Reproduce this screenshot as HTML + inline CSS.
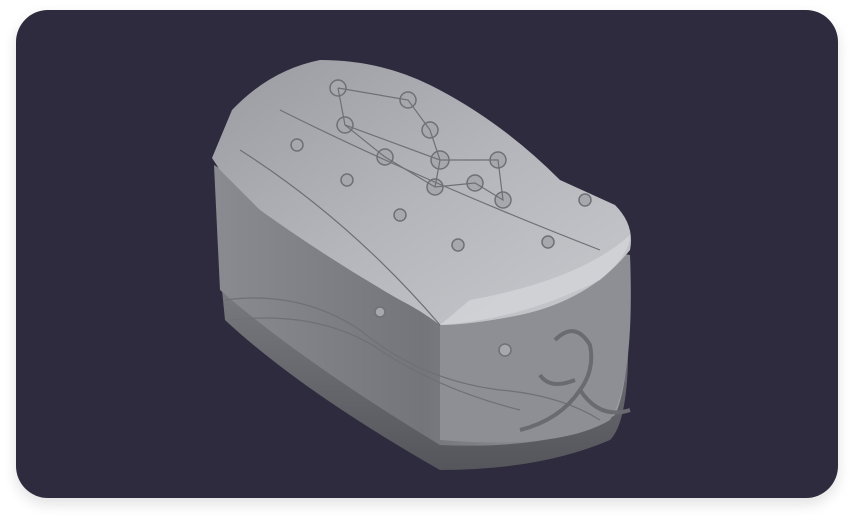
<!DOCTYPE html>
<html><head><style>
html,body{margin:0;padding:0;background:#fff;width:854px;height:520px;overflow:hidden}
.card{position:absolute;left:16px;top:10px;width:822px;height:488px;background:#2f2b3f;border-radius:32px;box-shadow:0 6px 14px rgba(0,0,0,.12)}
svg{position:absolute;left:0;top:0}
</style></head><body>
<div class="card"></div>
<svg width="854" height="520" viewBox="0 0 854 520">
<defs>
<linearGradient id="lid" x1="0" y1="0" x2="1" y2="1">
<stop offset="0" stop-color="#9a9ba0"/><stop offset=".5" stop-color="#b4b5ba"/><stop offset="1" stop-color="#c8c9cd"/></linearGradient>
<linearGradient id="body" x1="0" y1="0" x2="1" y2="0">
<stop offset="0" stop-color="#8a8b90"/><stop offset=".5" stop-color="#74757a"/><stop offset="1" stop-color="#9d9ea3"/></linearGradient>
<linearGradient id="base" x1="0" y1="0" x2="0" y2="1">
<stop offset="0" stop-color="#7c7d82"/><stop offset="1" stop-color="#55565b"/></linearGradient>
</defs>
<!-- base band -->
<path d="M220 270 L225 320 Q300 390 440 470 Q540 470 610 440 Q630 420 628 330 L430 320 Z" fill="url(#base)"/>
<!-- body -->
<path d="M214 165 L220 290 Q300 360 440 445 Q560 450 615 415 Q632 380 630 260 L440 300 Z" fill="url(#body)"/>
<!-- end face right -->
<path d="M440 300 Q520 300 600 250 L630 255 Q635 380 610 420 Q560 450 440 440 Z" fill="#8e8f94"/>
<!-- lid -->
<path d="M212 158 L232 110 Q270 70 320 60 Q380 60 430 85 Q500 120 560 180 L615 205 Q635 225 630 250 Q590 300 520 315 Q470 325 440 325 Q420 310 400 300 Q330 260 260 210 L220 170 Z" fill="url(#lid)"/>
<path d="M440 325 Q520 320 600 280 Q630 255 630 235 Q580 280 470 300 Z" fill="#d6d7da" opacity=".7"/>
<!-- decorative circles -->
<g fill="#a7a8ad" stroke="#6f7075" stroke-width="1.5">
<circle cx="338" cy="88" r="8"/><circle cx="408" cy="100" r="8"/><circle cx="345" cy="125" r="8"/>
<circle cx="430" cy="130" r="8"/><circle cx="385" cy="157" r="8"/><circle cx="440" cy="160" r="9"/>
<circle cx="498" cy="160" r="8"/><circle cx="435" cy="187" r="8"/><circle cx="475" cy="183" r="8"/>
<circle cx="503" cy="200" r="8"/><circle cx="297" cy="145" r="6"/><circle cx="347" cy="180" r="6"/>
<circle cx="400" cy="215" r="6"/><circle cx="458" cy="245" r="6"/><circle cx="548" cy="242" r="6"/>
<circle cx="585" cy="200" r="6"/><circle cx="505" cy="350" r="6"/><circle cx="380" cy="312" r="5"/>
</g>
<g stroke="#6f7075" stroke-width="1.2" fill="none">
<path d="M338 88 L408 100 L430 130 L440 160 L498 160 L503 200 L475 183 L435 187 L385 157 L345 125 L338 88"/>
<path d="M345 125 L440 160 L435 187"/>
<path d="M240 150 Q350 220 440 325"/><path d="M280 110 Q420 180 600 250"/>
<path d="M225 300 Q300 290 360 330 Q420 380 500 390 Q560 395 600 420"/>
<path d="M230 320 Q320 310 380 350 Q440 390 520 410"/>
</g>
<!-- octopus -->
<path d="M555 340 Q575 320 590 345 Q595 370 580 390 Q600 420 630 410 M580 390 Q560 420 520 430 M575 380 Q550 390 540 375" stroke="#6a6b70" stroke-width="4" fill="none"/>
</svg>
</body></html>
